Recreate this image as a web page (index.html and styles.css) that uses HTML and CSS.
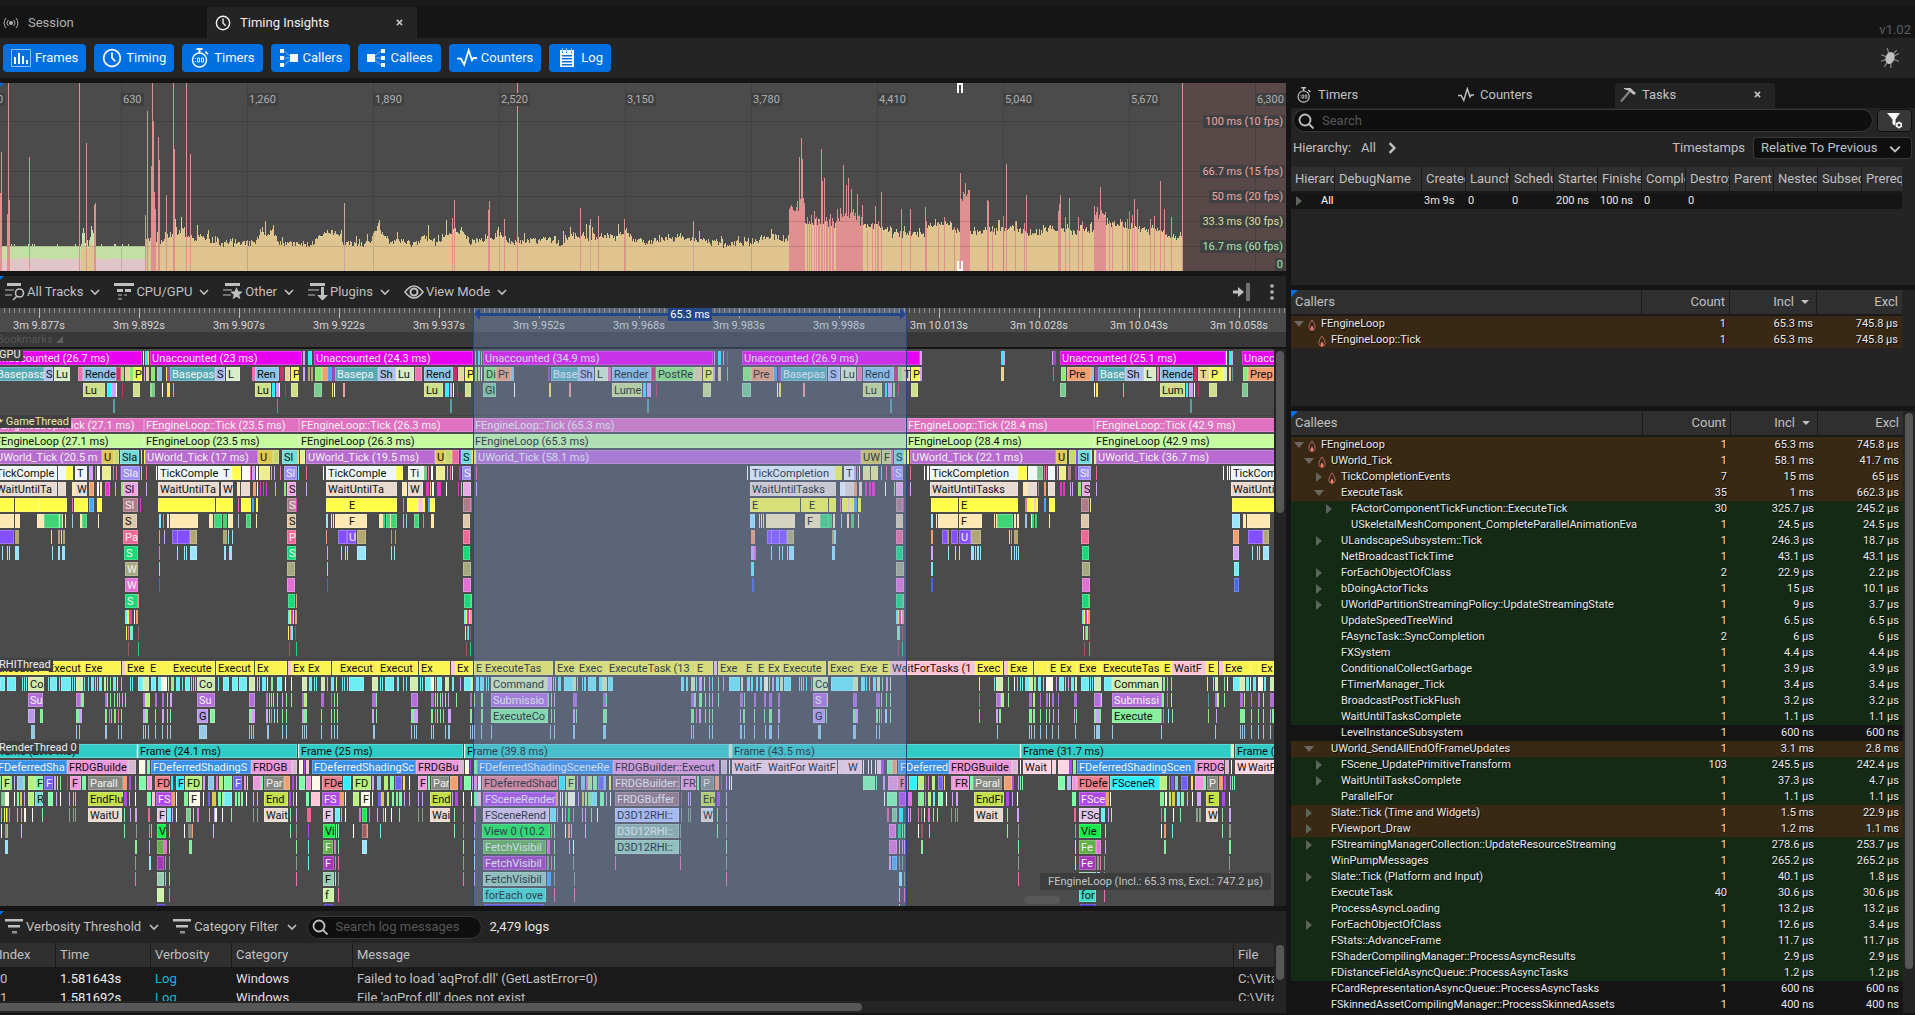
FILE: index.html
```html
<!DOCTYPE html>
<html lang="en">
<head>
    <meta charset="UTF-8">
    <meta name="viewport" content="width=device-width, initial-scale=1.0">
    <title>Timing Insights</title>
    <link rel="stylesheet" href="styles.css">
</head>
<body>
    <svg class="sprite" aria-hidden="true">
        <symbol id="i-session" viewBox="0 0 16 16"><circle cx="8" cy="8" r="2" fill="currentColor"/><path d="M5.3 5a4.5 4.5 0 0 0 0 6M10.700 5a4.500 4.500 0 0 1 0 6M3 3a7.500 7.500 0 0 0 0 10M13 3a7.500 7.500 0 0 1 0 10" fill="none" stroke="currentColor"/></symbol>
        <symbol id="i-clock" viewBox="0 0 18 18"><circle cx="9" cy="9" r="7.500" fill="none" stroke="currentColor" stroke-width="1.600"/><path d="M9 4v5l3 3" fill="none" stroke="currentColor" stroke-width="1.600"/></symbol>
        <symbol id="i-frames" viewBox="0 0 20 20"><path d="M.5 1.500h19v17H.5z" fill="none" stroke="currentColor" opacity=".6"/><path d="M3 9h2v7H3zM7 5h2v11H7zM11 8h2v8h-2zM15 12h2v4h-2z" fill="currentColor"/></symbol>
        <symbol id="i-timer" viewBox="0 0 18 20"><circle cx="8.500" cy="12" r="7" fill="none" stroke="currentColor" stroke-width="1.500"/><path d="M5.500 0h6v2h-6zM7.500 2h2v3h-2zM15 3l2.500 2.500-1.300 1.300L13.700 4.300z" fill="currentColor"/><path d="M4.300 10v1M4.300 13v1M6.500 10h2v4h-2zM10.500 10h2v4h-2z" fill="none" stroke="currentColor"/></symbol>
        <symbol id="i-callers" viewBox="0 0 20 20"><path d="M1 1h4v4H1zM1 8h4v4H1zM1 15h4v4H1zM11 6h8v8h-8z" fill="currentColor"/><path d="M5 3l6 5M5 10h6M5 17l6-5" stroke="currentColor" opacity=".5"/></symbol>
        <symbol id="i-callees" viewBox="0 0 20 20"><path d="M15 1h4v4h-4zM15 8h4v4h-4zM15 15h4v4h-4zM1 6h8v8H1z" fill="currentColor"/><path d="M15 3L9 8M15 10H9M15 17l-6-5" stroke="currentColor" opacity=".5"/></symbol>
        <symbol id="i-pulse" viewBox="0 0 18 18"><path d="M0 9.500h3.500L6.500 15 10.500 2l3 9 1.300-2H18" fill="none" stroke="currentColor" stroke-width="1.600"/></symbol>
        <symbol id="i-log" viewBox="0 0 16 20"><path fill-rule="evenodd" d="M1 2h2v3h1V2h3v3h1V2h4v3h1V2h2v17H1zM3 7v1.500h10V7zM3 10v1.500h10V10zM3 13v1.500h10V13zM3 16v1.500h10V16z" fill="currentColor"/><path d="M3.500 0v4M7.500 0v4M12.500 0v4" stroke="currentColor" opacity=".6"/></symbol>
        <symbol id="i-bug" viewBox="0 0 18 18"><ellipse cx="9" cy="9" rx="4" ry="5.500" transform="rotate(20 9 9)" fill="currentColor"/><path d="M9 9L1 6M9 9L1 12M9 9L6.500 0M9 9l8-4M9 9l8 3M9 9l1 9M9 9l6-7M9 9l-5 8" stroke="currentColor" opacity=".7"/></symbol>
        <symbol id="i-hammer" viewBox="0 0 16 16"><path d="M1 14.500L10 4" stroke="currentColor" stroke-width="2.200" opacity=".6"/><path d="M4 1h6.500l3 3L16 6l-2 2-2.500-2-2-2L4 2z" fill="currentColor"/></symbol>
        <symbol id="i-search" viewBox="0 0 16 16"><circle cx="7" cy="7" r="5.500" fill="none" stroke="currentColor" stroke-width="1.800"/><path d="M11 11l4.500 4.500" stroke="currentColor" stroke-width="1.800"/></symbol>
        <symbol id="i-funnel" viewBox="0 0 18 18"><path d="M1 1h13L9.500 7.500V14l-3-2V7.500z" fill="currentColor"/><circle cx="13" cy="13" r="3" fill="#383838"/><circle cx="13" cy="13" r="2.300" fill="none" stroke="currentColor" stroke-width="1.500"/><path d="M13 9.300v1.500M13 15.200v1.500M9.800 11.200l1.300.7M14.900 14.100l1.300.7M9.800 14.800l1.300-.7M14.900 11.900l1.300-.7" stroke="currentColor"/></symbol>
        <symbol id="i-down" viewBox="0 0 10 10"><path d="M1 3l4 4 4-4" fill="none" stroke="currentColor" stroke-width="1.600"/></symbol>
        <symbol id="i-right" viewBox="0 0 10 10"><path d="M3 1l4 4-4 4" fill="none" stroke="currentColor" stroke-width="2"/></symbol>
        <symbol id="i-close" viewBox="0 0 8 8"><path d="M1 1l6 6M7 1L1 7" stroke="currentColor" stroke-width="1.800"/></symbol>
        <symbol id="i-tracks" viewBox="0 0 20 18"><path d="M2 0h14v3H2z" fill="currentColor"/><path d="M0 6h9v2H0zM0 11h7v2H0z" fill="currentColor" opacity=".5"/><circle cx="14.500" cy="10" r="4" fill="none" stroke="currentColor" stroke-width="1.600"/><path d="M12 13l-4 4" stroke="currentColor" stroke-width="1.600"/></symbol>
        <symbol id="i-cpu" viewBox="0 0 20 18"><path d="M0 0h20v3H0zM3 6h6v3H3zM11 6h6v3h-6z" fill="currentColor"/><path d="M4 11h4v2H4zM4 15h4v2H4zM10 11h3v2h-3z" fill="currentColor" opacity=".5"/></symbol>
        <symbol id="i-other" viewBox="0 0 20 18"><path d="M2 0h15v3H2z" fill="currentColor"/><path d="M0 6h9v2H0zM0 11h8v2H0z" fill="currentColor" opacity=".5"/><path d="M13.500 4l1.800 4.300 4.400.4-3.400 3 1.100 4.500-3.900-2.400-3.900 2.400 1.100-4.500-3.400-3 4.400-.4z" fill="currentColor"/></symbol>
        <symbol id="i-plugins" viewBox="0 0 20 18"><path d="M2 0h15v3H2z" fill="currentColor"/><path d="M0 6h11v2H0zM0 11h7v2H0z" fill="currentColor" opacity=".5"/><path d="M13 4h3v8h4l-5.500 5.500L9 12h4z" fill="currentColor"/></symbol>
        <symbol id="i-eye" viewBox="0 0 20 14"><path d="M1 7q9-12 18 0-9 12-18 0z" fill="none" stroke="currentColor" stroke-width="1.600"/><circle cx="10" cy="7" r="3.500" fill="none" stroke="currentColor" stroke-width="2"/></symbol>
        <symbol id="i-filter" viewBox="0 0 18 16"><path d="M0 0h18v2.500H0zM3 6h12v2.500H3z" fill="currentColor"/><path d="M7 12h5v2.500H7z" fill="currentColor" opacity=".7"/></symbol>
        <symbol id="i-follow" viewBox="0 0 18 18"><path d="M0 7.500h5V4l6 5-6 5v-3.500H0z" fill="currentColor"/><path d="M13 0h4v18h-4z" fill="currentColor" opacity=".5"/></symbol>
        <symbol id="i-dots" viewBox="0 0 4 16"><path d="M.5.5h3v3h-3zM.5 6.500h3v3h-3zM.5 12.500h3v3h-3z" fill="currentColor"/></symbol>
        <symbol id="i-flame" viewBox="0 0 8 12"><path d="M4 .8Q7.300 5 7.300 8.500 6.500 11.500 4 11.500T.7 8.500Q.7 5 4 .8z" fill="none" stroke="#b0645c"/><path d="M4 6.500q1.800 2 1.500 3.700L4 11.500 2.500 10.200Q2.200 8.500 4 6.500z" fill="#f08078"/></symbol>
    </svg>

    <nav class="window-tabs">
        <button class="tab"><svg class="i16"><use href="#i-session"/></svg>Session</button>
        <button class="tab active"><svg class="i16"><use href="#i-clock"/></svg>Timing Insights<svg class="close"><use href="#i-close"/></svg></button>
        <span class="version">v1.02</span>
    </nav>

    <div class="toolbar">
        <button><svg class="i20"><use href="#i-frames"/></svg>Frames</button>
        <button><svg class="i20"><use href="#i-clock"/></svg>Timing</button>
        <button><svg class="i20"><use href="#i-timer"/></svg>Timers</button>
        <button><svg class="i20"><use href="#i-callers"/></svg>Callers</button>
        <button><svg class="i20"><use href="#i-callees"/></svg>Callees</button>
        <button><svg class="i20"><use href="#i-pulse"/></svg>Counters</button>
        <button><svg class="i20"><use href="#i-log"/></svg>Log</button>
        <svg class="bug"><use href="#i-bug"/></svg>
    </div>

    <main>
        <section class="left">
            <div class="panel frames" id="frames">
                <svg id="frames-graph" viewBox="0 0 1286 188" preserveAspectRatio="none"></svg>
                <div class="fps">
                    <span class="slow at-100">100 ms (10 fps)</span>
                    <span class="slow at-67">66.7 ms (15 fps)</span>
                    <span class="slow at-50">50 ms (20 fps)</span>
                    <span class="mid at-33">33.3 ms (30 fps)</span>
                    <span class="fast at-17">16.7 ms (60 fps)</span>
                    <span class="fast at-0">0</span>
                </div>
            </div>

            <div class="panel timing">
                <div class="bar">
                    <button><svg class="wide"><use href="#i-tracks"/></svg>All Tracks<svg class="i10"><use href="#i-down"/></svg></button>
                    <button><svg class="wide"><use href="#i-cpu"/></svg>CPU/GPU<svg class="i10"><use href="#i-down"/></svg></button>
                    <button><svg class="wide"><use href="#i-other"/></svg>Other<svg class="i10"><use href="#i-down"/></svg></button>
                    <button><svg class="wide"><use href="#i-plugins"/></svg>Plugins<svg class="i10"><use href="#i-down"/></svg></button>
                    <button><svg class="wide"><use href="#i-eye"/></svg>View Mode<svg class="i10"><use href="#i-down"/></svg></button>
                    <button class="follow" aria-label="Auto scroll"><svg class="i18"><use href="#i-follow"/></svg></button>
                    <button class="more" aria-label="More"><svg><use href="#i-dots"/></svg></button>
                </div>
                <div class="timeline">
                    <div class="ruler" id="ruler"></div>
                    <div class="bookmarks">Bookmarks<i></i></div>
                    <div class="tracks-wrap">
                        <div class="tracks" id="tracks"></div>
                        <div class="scroll-v"><div class="thumb tall"></div></div>
                    </div>
                    <div class="selection"><span>65.3 ms</span></div>
                    <div class="hint">FEngineLoop (Incl.: 65.3 ms, Excl.: 747.2 µs)</div>
                    <div class="scroll-h"></div>
                </div>
            </div>

            <div class="panel log">
                <div class="bar">
                    <button><svg class="filter"><use href="#i-filter"/></svg>Verbosity Threshold<svg class="i10"><use href="#i-down"/></svg></button>
                    <button><svg class="filter"><use href="#i-filter"/></svg>Category Filter<svg class="i10"><use href="#i-down"/></svg></button>
                    <label class="search"><svg class="i16"><use href="#i-search"/></svg><input type="text" placeholder="Search log messages" aria-label="Search log messages"></label>
                    <span class="count">2,479 logs</span>
                </div>
                <div class="log-body">
                    <table class="log-table">
                        <colgroup><col class="c-index"><col class="c-time"><col class="c-verb"><col class="c-cat"><col><col class="c-file"></colgroup>
                        <thead><tr><th>Index</th><th>Time</th><th>Verbosity</th><th>Category</th><th>Message</th><th>File</th></tr></thead>
                        <tbody>
                            <tr><td>0</td><td class="hi">1.581643s</td><td class="verb">Log</td><td class="cat">Windows</td><td>Failed to load 'aqProf.dll' (GetLastError=0)</td><td>C:\Vita</td></tr>
                            <tr><td>1</td><td class="hi">1.581692s</td><td class="verb">Log</td><td class="cat">Windows</td><td>File 'aqProf.dll' does not exist</td><td>C:\Vita</td></tr>
                        </tbody>
                    </table>
                    <div class="scroll-v"><div class="thumb short"></div></div>
                </div>
                <div class="log-scroll"></div>
            </div>
        </section>

        <section class="right">
            <div class="tasks">
                <nav class="sub-tabs">
                    <button class="tab"><svg class="i16"><use href="#i-timer"/></svg>Timers</button>
                    <button class="tab"><svg class="i16"><use href="#i-pulse"/></svg>Counters</button>
                    <button class="tab active"><svg class="i16"><use href="#i-hammer"/></svg>Tasks<svg class="close"><use href="#i-close"/></svg></button>
                </nav>
                <div class="panel tasks-body">
                    <div class="row">
                        <label class="search"><svg class="i16"><use href="#i-search"/></svg><input type="text" placeholder="Search" aria-label="Search"></label>
                        <button class="filter-btn" aria-label="Filter"><svg class="i18"><use href="#i-funnel"/></svg></button>
                    </div>
                    <div class="row hierarchy">
                        <span>Hierarchy:</span><span>All</span><svg class="i10"><use href="#i-right"/></svg>
                        <label for="stamps">Timestamps</label>
                        <div class="select">
                            <select id="stamps"><option>Relative To Previous</option></select>
                            <svg class="i10"><use href="#i-down"/></svg>
                        </div>
                    </div>
                    <table class="tasks-table">
                        <colgroup><col><col class="c-debug"><col><col><col><col><col><col><col><col><col><col><col class="c-last"></colgroup>
                        <thead><tr><th>Hierarchy</th><th>DebugName</th><th>Created</th><th>Launched</th><th>Scheduled</th><th>Started</th><th>Finished</th><th>Completed</th><th>Destroyed</th><th>Parent</th><th>Nested</th><th>Subsequents</th><th>Prerequisites</th></tr></thead>
                        <tbody><tr><td class="name"><i class="closed"></i>All</td><td></td><td>3m 9s</td><td>0</td><td>0</td><td>200 ns</td><td>100 ns</td><td>0</td><td>0</td><td></td><td></td><td></td><td></td></tr></tbody>
                    </table>
                </div>
            </div>

            <div class="panel callers">
                <table class="calls">
                    <colgroup><col><col class="c-count"><col class="c-incl"><col class="c-excl"></colgroup>
                    <thead><tr><th>Callers</th><th>Count</th><th>Incl<i></i></th><th>Excl</th></tr></thead>
                    <tbody id="callers"></tbody>
                </table>
            </div>

            <div class="panel callees">
                <table class="calls">
                    <colgroup><col><col class="c-count"><col class="c-incl"><col class="c-excl"></colgroup>
                    <thead><tr><th>Callees</th><th>Count</th><th>Incl<i></i></th><th>Excl</th></tr></thead>
                    <tbody id="callees"></tbody>
                </table>
                <div class="scroll-v"><div class="thumb long"></div></div>
            </div>
        </section>
    </main>

    <script src="script.js"></script>
</body>
</html>
```

FILE: styles.css
```css
* {
    box-sizing: border-box;
}
body {
    margin: 0;
    height: 100vh;
    display: flex;
    flex-direction: column;
    overflow: hidden;
    padding-top: 7px;
    background-color: #1a1a1a;
    color: #c0c0c0;
    font-family: Roboto, sans-serif;
    font-size: 13px;
    line-height: 16px;
}
button,
input,
select {
    font: inherit;
    color: inherit;
    background: none;
    border: none;
    padding: 0;
    margin: 0;
}
svg {
    flex: none;
}
.sprite {
    position: absolute;
    width: 0;
    height: 0;
}
.i10 { width: 10px; height: 10px; }
.i16 { width: 16px; height: 16px; }
.i18 { width: 18px; height: 18px; }
.i20 { width: 20px; height: 20px; }

/* window tabs and main toolbar */
.window-tabs {
    display: flex;
    flex: none;
    height: 31px;
    background-color: #151515;
}
.tab {
    display: flex;
    align-items: center;
    gap: 9px;
    color: #b0b0b0;
}
.window-tabs .tab {
    width: 210px;
    padding: 0 14px 0 3px;
}
.window-tabs .tab:first-child {
    width: 207px;
}
.tab.active {
    background-color: #242424;
    border-radius: 4px 4px 0 0;
}
.window-tabs .tab.active {
    color: #f0f0f0;
    padding-left: 8px;
}
.close {
    width: 7px;
    height: 7px;
    margin-left: auto;
    color: #c0c0c0;
}
.version {
    margin-left: auto;
    align-self: flex-end;
    padding-right: 4px;
    color: #5c5c5c;
}
.toolbar {
    display: flex;
    flex: none;
    align-items: center;
    gap: 8px;
    height: 40px;
    padding: 0 15px 0 3px;
    background-color: #242424;
}
.toolbar button {
    display: flex;
    align-items: center;
    gap: 4px;
    height: 28px;
    padding: 0 8px;
    border-radius: 4px;
    background-color: #0070e0;
    color: #f4f8ff;
}
.bug {
    width: 20px;
    height: 20px;
    margin-left: auto;
}

/* panels */
main {
    flex: 1;
    min-height: 0;
    display: grid;
    grid-template-columns: 1286fr 624fr;
    gap: 5px;
    padding: 5px 0 2px;
    background-color: #151515;
}
.left,
.right {
    display: flex;
    flex-direction: column;
    gap: 5px;
    min-width: 0;
    min-height: 0;
}
.panel {
    position: relative;
    overflow: hidden;
    background-color: #242424;
}
.panel:not(.tasks-body)::before {
    content: "";
    position: absolute;
    z-index: 5;
    left: 0;
    top: 0;
    border-top: 7px solid #0070e0;
    border-right: 7px solid transparent;
}
.left .panel::before {
    border-top-width: 4px;
    border-right-width: 4px;
}

/* frames graph */
.frames {
    flex: none;
    height: 188px;
    background-color: #4b4b4b;
    font-size: 11px;
    line-height: 12px;
}
.frames svg {
    display: block;
    width: 100%;
    height: 188px;
}
.frame-no {
    position: absolute;
    top: 10px;
    padding: 1px 2px 0;
    background-color: #404040;
    color: #b0b0b0;
}
.fps span {
    position: absolute;
    right: 1px;
    padding: 1px 2px 0;
    background-color: #404040;
}
.slow { color: #eaa8a8; }
.mid { color: #dede9c; }
.fast { color: #a8e8b0; }
.at-100 { top: 32px; }
.at-67 { top: 82px; }
.at-50 { top: 107px; }
.at-33 { top: 132px; }
.at-17 { top: 157px; }
.at-0 { top: 175px; }

/* timing view */
.timing {
    flex: 1;
    min-height: 0;
    display: flex;
    flex-direction: column;
}
.bar {
    display: flex;
    flex: none;
    align-items: center;
    height: 32px;
    padding: 0 12px 0 5px;
}
.bar button {
    display: flex;
    align-items: center;
    gap: 2px;
    margin-right: 14px;
}
.bar button .i10 {
    margin-left: 5px;
}
.wide {
    width: 20px;
    height: 18px;
}
.bar .follow {
    margin-left: auto;
    margin-right: 19px;
}
.bar .more {
    margin-right: 0;
}
.more svg {
    width: 4px;
    height: 16px;
}
.timeline {
    position: relative;
    flex: 1;
    min-height: 0;
    display: flex;
    flex-direction: column;
    overflow: hidden;
    font-size: 11px;
    line-height: 14px;
}
.ruler {
    position: relative;
    flex: none;
    height: 24px;
    background-color: #4b4b4b;
    background-image:
        repeating-linear-gradient(to right, #b8b8b8 0 1px, transparent 1px 100px),
        repeating-linear-gradient(to right, #909090 0 1px, transparent 1px 5px);
    background-size: 100px 10px, 5px 5px;
    background-position: 39px 0, 4px 0;
    background-repeat: repeat-x;
}
.ruler span {
    position: absolute;
    top: 11px;
    width: 100px;
    text-align: center;
    color: #d4d4d4;
}
.bookmarks {
    display: flex;
    flex: none;
    align-items: center;
    gap: 3px;
    height: 17px;
    margin-left: -3px;
    border-bottom: 2px solid #141414;
    background-color: #383838;
    color: #565656;
}
.bookmarks i {
    border-left: 7px solid transparent;
    border-bottom: 7px solid #606060;
}
.tracks-wrap {
    flex: 1;
    min-height: 0;
    display: flex;
}
.tracks {
    position: relative;
    flex: 1;
    overflow: hidden;
    background-color: #4b4b4b;
}
.track {
    position: relative;
    padding-top: 2px;
    border-top: 1px solid #424242;
}
.track:first-child {
    border-top: none;
}
.track h4 {
    position: absolute;
    z-index: 2;
    left: -3px;
    top: 0;
    margin: 0;
    padding: 0 2px;
    background-color: #404040;
    color: #ececec;
    font-size: 11px;
    font-weight: normal;
    line-height: 12px;
}
.track h4.game {
    left: -8px;
    color: #e8e8a0;
}
.lane {
    position: relative;
    height: 16px;
}
.ev {
    position: absolute;
    top: 0;
    height: 14px;
    overflow: hidden;
    white-space: nowrap;
    line-height: 16px;
    color: #101010;
}
.ev.boxed {
    padding-left: 2px;
    box-shadow: inset 0 0 0 1px rgba(255, 255, 255, 0.22);
}
.ev.light {
    color: #f2f2f2;
}
.selection {
    position: absolute;
    z-index: 3;
    left: 473px;
    top: 0;
    bottom: 0;
    width: 434px;
    border-left: 1px solid #24478a;
    border-right: 1px solid #24478a;
    background-color: rgba(130, 162, 220, 0.31);
    text-align: center;
    line-height: 13px;
}
.selection::before {
    content: "";
    position: absolute;
    left: 0;
    right: 0;
    top: 0;
    height: 12px;
    background-color: #24478a;
    clip-path: polygon(0 50%, 6px 0, 6px 5px, calc(100% - 6px) 5px, calc(100% - 6px) 0, 100% 50%, calc(100% - 6px) 100%, calc(100% - 6px) 8px, 6px 8px, 6px 100%);
}
.selection span {
    position: relative;
    display: inline-block;
    padding: 0 2px;
    background-color: #24478a;
    color: #ffffff;
}
.hint {
    position: absolute;
    z-index: 4;
    right: 15px;
    bottom: 16px;
    padding: 2px 8px 1px;
    background-color: #3d3d3d;
    color: #c4c4c4;
}
.scroll-h {
    position: absolute;
    right: 226px;
    bottom: 2px;
    width: 36px;
    height: 8px;
    border-radius: 4px;
    background-color: #585858;
}
.scroll-v {
    flex: none;
    width: 12px;
    padding: 2px;
}
.thumb {
    border-radius: 4px;
    background-color: #575757;
}
.tall { height: 162px; }
.short { height: 35px; }
.long { height: 556px; }

/* log */
.log {
    flex: none;
    height: 102px;
}
.filter {
    width: 18px;
    height: 16px;
}
.log .bar button {
    gap: 3px;
}
.search {
    display: flex;
    align-items: center;
    gap: 8px;
    height: 23px;
    padding: 0 4px;
    border: 1px solid #383838;
    border-radius: 12px;
    background-color: #0f0f0f;
}
.search input {
    flex: 1;
    min-width: 0;
    outline: none;
}
.search input::placeholder {
    color: #585858;
}
.log .search {
    width: 175px;
    margin-left: -4px;
}
.count {
    margin-left: 8px;
    color: #e4e4e4;
}
.log-body {
    display: flex;
    height: 58px;
    overflow: hidden;
}
table {
    flex: 1;
    align-self: flex-start;
    width: 100%;
    table-layout: fixed;
    border-collapse: separate;
    border-spacing: 0;
}
th {
    height: 24px;
    padding: 0 4px;
    overflow: hidden;
    white-space: nowrap;
    text-align: left;
    font-weight: normal;
    background-color: #2f2f2f;
    border-right: 1px solid #1a1a1a;
}
th:last-child {
    border-right: none;
}
td {
    overflow: hidden;
    white-space: nowrap;
    padding: 0;
}
.log-table tbody {
    background-color: #1a1a1a;
}
.log-table th:first-child,
.log-table td:first-child {
    padding-left: 0;
}
.log-table th:first-child {
    text-indent: -1px;
}
.log-table td {
    height: 19px;
    padding-left: 4px;
    vertical-align: bottom;
}
.log-table tr:first-child td {
    height: 20px;
}
.log-table .hi { color: #f0f0f0; }
.log-table .verb { color: #18b8d8; }
.log-table .cat { color: #e8dce0; }
.c-index { width: 56px; }
.c-time { width: 95px; }
.c-verb { width: 81px; }
.c-cat { width: 121px; }
.c-file { width: 40px; }
.log-scroll {
    width: 67%;
    height: 8px;
    margin-top: 2px;
    border-radius: 0 4px 4px 0;
    background-color: #575757;
}

/* tasks */
.tasks {
    flex: none;
    display: flex;
    flex-direction: column;
    height: 202px;
}
.sub-tabs {
    display: flex;
    gap: 2px;
    flex: none;
    height: 25px;
}
.sub-tabs .tab {
    width: 160px;
    padding: 0 14px 2px 5px;
    gap: 6px;
    color: #c0c0c0;
}
.tasks-body {
    flex: 1;
    padding-top: 1px;
}
.row {
    display: flex;
    align-items: center;
    gap: 4px;
    padding: 0 3px 0 2px;
}
.row .search {
    flex: 1;
}
.filter-btn {
    display: flex;
    align-items: center;
    justify-content: center;
    width: 35px;
    height: 23px;
    border: 1px solid #0f0f0f;
    border-radius: 4px;
    background-color: #383838;
    color: #ffffff;
}
.hierarchy {
    gap: 10px;
    margin: 5px 0 8px;
}
.hierarchy .i10 {
    width: 12px;
    height: 12px;
}
.hierarchy label {
    margin-left: auto;
    margin-right: -2px;
}
.select {
    position: relative;
    width: 159px;
    height: 22px;
    border: 1px solid #383838;
    border-radius: 4px;
    background-color: #0f0f0f;
}
.select select {
    appearance: none;
    width: 100%;
    height: 20px;
    padding-left: 7px;
}
.select svg {
    position: absolute;
    right: 10px;
    top: 5px;
    pointer-events: none;
}
.tasks-table,
.calls {
    width: calc(100% - 13px);
}
.tasks-table th,
.calls th {
    height: 26px;
    border-bottom: 2px solid #1a1a1a;
}
.tasks-table td,
.calls td {
    height: 16px;
    font-size: 11px;
    line-height: 16px;
    color: #e8e8e8;
}
.tasks-table td {
    background-color: #151515;
    padding-left: 2px;
}
.tasks-table .name {
    padding-left: 5px;
    color: #ffffff;
}
.c-debug { width: 87px; }
.c-last { width: 40px; }

/* callers and callees */
.callers {
    flex: none;
    height: 116px;
}
.callees {
    flex: 1;
    min-height: 0;
    display: flex;
}
.calls th:not(:first-child),
.calls td:not(:first-child) {
    text-align: right;
}
.calls td:not(:first-child) {
    padding-right: 4px;
}
.calls th i {
    display: inline-block;
    margin: 0 3px 2px 7px;
    border: 4px solid transparent;
    border-top-color: #c0c0c0;
    border-bottom: none;
}
.c-count { width: 88px; }
.c-incl { width: 87px; }
.c-excl { width: 85px; }
.calls .ms { background-color: #382814; }
.calls .us { background-color: #142a14; }
.calls .ns { background-color: #151515; }
.calls td {
    text-shadow: 1px 1px 0 #0a0a0a;
}
.cell {
    display: flex;
    align-items: center;
}
.open {
    flex: none;
    border-top: 6px solid #6c6860;
    border-left: 5px solid transparent;
    border-right: 5px solid transparent;
}
.closed {
    flex: none;
    display: inline-block;
    margin: 0 2px;
    border-top: 5px solid transparent;
    border-bottom: 5px solid transparent;
    border-left: 6px solid #5c645c;
}
.leaf {
    flex: none;
    width: 10px;
}
.tasks-table .closed {
    margin: 0 19px 0 0;
    vertical-align: -2px;
}
.flame {
    width: 8px;
    height: 12px;
    margin: 2px 5px 0 4px;
}
.no-flame {
    flex: none;
    width: 17px;
}
```

FILE: script.js
```js
// ---------- frames graph ----------
let seed = 7;
function rnd() {
    seed = (seed * 16807) % 2147483647;
    return seed / 2147483647;
}

const colors = { green: '#c5e0a5', pink: '#e0c5c8', orange: '#e0c48f', red: '#e09090', pale: '#c8a8a0' };
const paths = { green: '', orange: '', pink: '', pale: '', red: '' };
function bar(color, x, h, w = 1) {
    paths[color] += `M${x} 188v-${h}h${w}v${h}z`;
}

// x, height pairs of the average frame time
const profile = [145,30, 152,32, 160,27, 170,36, 182,40, 190,29, 200,34, 212,30, 222,27, 240,26, 255,28, 262,38, 274,38,
    280,27, 310,26, 325,36, 337,38, 343,27, 368,27, 378,44, 386,29, 402,31, 412,25, 425,34, 435,28, 448,38, 462,38, 470,29,
    490,30, 497,38, 508,29, 522,27, 540,31, 555,29, 562,27, 570,36, 590,32, 600,36, 615,33, 625,40, 634,29, 645,27, 665,32,
    690,30, 725,26, 750,28, 772,34, 789,31, 790,46, 860,46, 880,44, 892,36, 925,36, 930,46, 950,46, 955,40, 960,40, 985,38,
    1000,40, 1008,44, 1030,36, 1050,42, 1062,42, 1075,38, 1095,42, 1110,47, 1135,44, 1148,36, 1154,44, 1168,34, 1176,32, 1182,38];
for (let i = 0; i < profile.length - 2; i += 2) {
    const [x0, h0, x1, h1] = profile.slice(i, i + 4);
    for (let x = x0; x < x1; x++) {
        const peak = rnd() > 0.9 ? rnd() * 9 : 0;
        const h = Math.round(h0 + (h1 - h0) * (x - x0) / (x1 - x0) + rnd() * 7 - 3 + peak);
        if (rnd() > 0.85) bar('green', x, h + 3);
        bar('orange', x, h);
    }
}
for (let x = 0; x < 145; x++) {
    bar('green', x, rnd() > 0.93 ? 27 : 25);
    if (x < 81 || x > 95) {
        bar('pink', x, 11 + Math.round(rnd() * 2));
    } else {
        bar('green', x, 24 + Math.round(rnd() * 22));
        bar('orange', x, 18 + Math.round(rnd() * 14));
    }
}
// solid runs of slow frames: from, to, height
[[789, 805, 66], [836, 858, 56], [858, 862, 50], [960, 970, 76], [1094, 1106, 58]].forEach(([a, b, h]) => {
    for (let x = a; x < b; x++) bar('red', x, h + Math.round(rnd() * 14 - 7));
});
// single spikes: x, height
[0,78, 1,119, 7,57, 8,188, 9,71, 29,114, 79,188, 86,128, 94,66, 95,68, 145,56, 147,160, 151,105, 152,188, 153,150, 154,79,
    155,62, 158,134, 159,111, 166,76, 173,188, 174,122, 186,188, 190,117, 452,53, 454,71, 488,61, 489,70, 504,52, 517,188,
    580,63, 598,55, 624,52, 799,114, 801,133, 802,112, 807,54, 809,50, 811,56, 814,60, 816,54, 818,50, 819,52, 821,122, 822,90,
    824,93, 826,54, 827,50, 829,52, 830,57, 832,53, 833,50, 843,106, 846,86, 848,93, 851,82, 857,77, 862,66, 867,40, 872,48,
    875,65, 878,50, 881,79, 901,62, 910,62, 925,64, 926,50, 938,48, 944,54, 954,44, 960,98, 965,88, 968,79, 987,71, 988,70,
    992,42, 1003,55, 1006,107, 1015,50, 1024,48, 1026,76, 1058,60, 1059,67, 1060,76, 1065,54, 1069,73, 1078,54, 1082,50,
    1100,84, 1109,50, 1112,46, 1122,50, 1127,52, 1129,60, 1132,56, 1134,72, 1137,62, 1150,52, 1154,55, 1160,90, 1164,62,
    1171,54, 1182,188].forEach((v, i, a) => {
    if (i % 2 === 0) bar('red', v, a[i + 1]);
});
[181,54, 344,68, 590,52, 693,50].forEach((v, i, a) => {
    if (i % 2 === 0) bar(i ? 'pale' : 'green', v, a[i + 1]);
});

let graph = '<path d="M1183 0H1286V188H1183z" fill="#584848"/>';
for (const c in paths) graph += `<path d="${paths[c]}" fill="${colors[c]}"/>`;
let grid = '';
for (let x = 121; x < 1286; x += 126) grid += `M${x} 0h1v188h-1z`;
[38, 88, 113, 138, 163].forEach(y => grid += `M0 ${y}h1286v1H0z`);
graph += `<path d="${grid}" fill="#000" opacity=".13"/>`;
graph += '<path d="M957 0h6v10h-2V2h-2v8h-2zM957 188h6v-10h-2v8h-2v-8h-2z" fill="#fff"/>';
document.getElementById('frames-graph').innerHTML = graph;

['0', '630', '1,260', '1,890', '2,520', '3,150', '3,780', '4,410', '5,040', '5,670', '6,300'].forEach((t, i) => {
    const el = document.createElement('span');
    el.className = 'frame-no';
    el.textContent = t;
    el.style.left = (i * 126 - 5) / 12.86 + '%';
    document.getElementById('frames').appendChild(el);
});

// ---------- time ruler ----------
['9.877', '9.892', '9.907', '9.922', '9.937', '9.952', '9.968', '9.983', '9.998', '10.013', '10.028', '10.043', '10.058'].forEach((t, i) => {
    const el = document.createElement('span');
    el.textContent = '3m ' + t + 's';
    el.style.left = i * 100 - 11 + 'px';
    document.getElementById('ruler').appendChild(el);
});

// ---------- timing tracks ----------
const pal = {
    m: '#e800f0', cy: '#2ef0ff', tl: '#57aab4', bl: '#b0bef0', lg: '#d8ecc8', hp: '#ee72b2', sk: '#8cc4ea', cr: '#c83068',
    lm: '#f2fa5a', tn: '#e8d498', gr: '#8ee878', sg: '#7cc890', or: '#f0a070', pu: '#9a4ab4', kh: '#cdde8c', vi: '#d0a4fa',
    w: '#ffffff', gs: '#57a0a0', yl: '#ffe060', sa: '#f09c9c', pk: '#e070c0', lt: '#c6fba2', wt: '#b86bd0', go: '#ddc850',
    ol: '#c8d870', tq: '#74dada', pt: '#eef6fa', yw: '#fdfd4a', wb: '#e8dad0', pc: '#fde8b4', gn: '#3ed478', ip: '#8450ff',
    kk: '#b0a870', lb: '#9ae4ff', pp: '#9a8cfa', pm: '#eaa8e4', br: '#ad7c86', bs: '#dcc8a8', re: '#ec6896', eg: '#18d878',
    ac: '#a6a880', og: '#e072d4', rw: '#ecec90', mg: '#e834c8', bu: '#48a8f8', rb: '#ee98dc', db: '#4866e8', yx: '#fbf450',
    px: '#fcc4d4', cx: '#70ecf4', co: '#d2ecb0', su: '#b070d8', gt: '#88f09c', gp: '#b898e8', sb: '#98c8e4', fr: '#30ccc6',
    df: '#3890ea', th: '#d8b8d0', cm: '#fdf8e4', pl: '#fcd4e4', fd: '#ec808c', gy: '#848880', lc: '#b8f080', en: '#c4e048',
    fs: '#b048e8', fn: '#e0c8e8', vv: '#10ec48', fv: '#60b048', fp: '#a038b8', fg: '#98ccb0', fo: '#ccf4a8', fc: '#40dcc8',
    in: '#4838c8', mn: '#80fca8', dk: '#a05860', dd: '#8aa08c', dg: '#96707a', db2: '#b8c4fa', tp: '#8cb0a0', bo: '#7060f0'
};
const lightText = ['m', 'tl', 'pk', 'wt', 'pp', 'br', 're', 'eg', 'ac', 'og', 'ip', 'su', 'df', 'gy', 'fs', 'fv', 'fp', 'bo', 'dg', 'tp'];

// each entry is "x[,x...] width color text"
const tracks = [
    { name: 'GPU', lanes: [
        '-7 149 m Unaccounted (26.7 ms)|143 1 w|145 3 cy|148 1 yl|150 152 m Unaccounted (23 ms)|303 2 vi|308 3 cy|311 1 gr|314 159 m Unaccounted (24.3 ms)|475 1 vi|478 2 cy|481 1 gr|483 230 m Unaccounted (34.9 ms)|714 1 vi|718 3 cy|723 1 vi|727 1 pu|742 178 m Unaccounted (26.9 ms)|920 2 vi|1001 3 cy|1004 1 vi|1052 1 vi|1053 3 pu|1060 166 m Unaccounted (25.1 ms)|1226 1 w|1229 3 cy|1232 1 vi|1242 50 m Unaccounted',
        '-5 49 tl Basepass|44 9 bl S|54 16 lg Lu|78 5 hp|83 33 sk Rende|116 5 cr|121 3 gr|125 5 tn|130 3 gr|133 9 lm P|144 1 vi|146 3 tn|151 4 gr|157 5 or|158 4 sk|166 1 yl|167 3 pu|170 45 tl Basepas|215 10 bl S|226 14 lg L|252 3 hp|255 24 sk Ren|280 4 cr|285 5 tn|291 8 lm P|303 2 vi|308,311 2 kk|315 7 gr|322 7 or|328 4 bu|332 3 pu|335 43 tl Basepa|378 18 bl Sh|396 18 lg Lu|415 7 hp|424 29 sk Rend|453 4 cr|458 6 tn|465 8 lm P|475 2 gr|478 2 tn|481 1 w|484 12 gr Di|496 15 or Pr|511 3 sk|548 2 pu|551 27 tl Base|578 16 bl Sh|595 13 lg L|608 3 hp|612 39 sk Render|651 5 cr|656 38 gr PostRe|694 8 tn|703 10 lm P|713 2 vi|718 3 tn|727 1 sg|743 8 gr|751 23 or Pre|774 3 bu|778 3 pu|781 46 tl Basepas|828 12 bl S|841 15 lg Lu|857 5 hp|863 31 sk Rend|894 4 cr|898 6 gr|902 8 tn T|911 9 lm P|920 2 vi|1001 3 tn|1053 1 gs|1061 5 gr|1067 24 or Pre|1091 3 sk|1095 3 pu|1098 27 tl Base|1125 19 bl Sh|1144 12 lg L|1157 2 hp|1160 33 sk Rende|1194 3 cr|1198 12 tn T|1209 15 lm P|1224 3 lg|1229 2 tn|1232 1 gs|1243 5 gr|1248 40 or Prep',
        '83 22 kh Lu|107 5 cy|112 4 vi|116 1 w|122 1 cr|133 7 kh|150 2 gr|152 3 sg|162 1 w|167 3 yl|173 1 sa|255 16 kh Lu|272 3 cy|276 3 vi|279 1 w|285 1 cr|291 7 kh|314 8 sg|332 1 yl|334 1 w|343 2 sa|424 19 kh Lu|445 4 cy|450 2 vi|453 1 w|457 1 cr|465 6 kh|483 13 sg Gl|514 1 w|549 2 yl|569 2 sa|612 30 kh Lume|643 3 cy|647 4 vi|656 1 cr|703 8 kh|742 9 sg|777 1 w|779 2 yl|803 2 sa|863 19 kh Lu|885 2 cy|888 4 vi|893 2 gr|898 1 cr|911 7 kh|1060 6 sg|1094 1 w|1096 2 yl|1123 1 sa|1160 25 kh Lum|1186 2 cy|1189 4 vi|1194 1 w|1198 1 cr|1209 8 kh|1242 6 sg',
        '113 2 gs|277 1 gs|450 2 gs|647 2 gs|890 2 gs|1190 2 gs'
    ] },
    { name: '⟳ GameThread', cls: 'game', lanes: [
        '-7 151 pk FEngineLoop::Tick (27.1 ms)|144 155 pk FEngineLoop::Tick (23.5 ms)|299 174 pk FEngineLoop::Tick (26.3 ms)|473 433 pk FEngineLoop::Tick (65.3 ms)|906 188 pk FEngineLoop::Tick (28.4 ms)|1094 190 pk FEngineLoop::Tick (42.9 ms)',
        '-7 151 lt FEngineLoop (27.1 ms)|144 155 lt FEngineLoop (23.5 ms)|299 174 lt FEngineLoop (26.3 ms)|473 433 lt FEngineLoop (65.3 ms)|906 188 lt FEngineLoop (28.4 ms)|1094 190 lt FEngineLoop (42.9 ms)',
        '-6 108 wt UWorld_Tick (20.5 m|102 12 go U|114 5 ol|120 19 tq Sla|141 1 yl|144 1 lm|145 113 wt UWorld_Tick (17 ms)|258 15 go U|273 6 ol|282 16 tq Sl|298 1 yl|300 5 rw|306 129 wt UWorld_Tick (19.5 ms)|435 10 go U|445 7 ol|452 7 re|460 1 ip|461 11 tq S|472 1 yl|474 2 lm|476 385 wt UWorld_Tick (58.1 ms)|861 20 go UW|882 9 ol F|891 2 hp|894 10 tq S|904 2 lm|907 2 lm|910 146 wt UWorld_Tick (22.1 ms)|1056 11 go U|1069 7 ol|1076 2 ip|1078 13 tq Sl|1091 1 lm|1094 2 rw|1096 190 wt UWorld_Tick (36.7 ms)',
        '-6 63 pt TickComple|58 8 pt|66 7 yw|75 12 pt T|89 4 vi|95 1 hp|97 3 w|102 9 rw|113,116 1 hp|120 1 pu|121 19 pp Sla|141 1 cx|146 1 re|156 1 w|158 63 pt TickComple|221 11 pt T|232 9 yw|242 8 w|250 1 hp|252 3 vi|256 2 w|259 11 rw|271,274 1 vi|280 1 hp|284 13 pp Sl|298 1 cx|306 1 re|323 1 w|326 70 pt TickComple|396 7 yw|408 16 pt Ti|424 3 sg|428 1 hp|431 2 w|436 9 rw|447 1 vi|450 1 hp|452 1 w|459 2 pu|462 9 pp S|476 1 re|747 1 w|750 85 pt TickCompletion|835 7 yw|844 10 pt T|854 2 vi|857 1 hp|859 1 w|863 7 rw|871 7 rw|881 1 vi|886 1 hp|891 2 hp|893 10 pp S|910 1 re|924 1 w|927 2 w|930 88 pt TickCompletion|1018 9 yw|1028 9 pt|1037 6 sg|1044,1046 1 hp|1048 7 pt|1057 1 vi|1059 7 rw|1068 3 br|1075 2 pu|1078 13 pp Sl|1096 1 re|1223,1227,1229 1 w|1231 43 pt TickCom',
        '-6 63 wb WaitUntilTa|58 8 wb|72 3 pc|75 12 wb W|89 5 or|97 2 w|100 2 pc|105 5 mg|115 1 vi|121 2 gr|123 15 pm Sl|146 1 vi|158 61 wb WaitUntilTa|221 12 wb W|237 3 pc|241 9 wb|253 3 or|257 1 w|260,263,266 1 mg|275 1 vi|284 2 gr|287 9 pm S|306 1 vi|326 71 wb WaitUntilTa|402 5 pc|408 15 wb W|426 3 mg|430 1 yl|432 2 w|437 4 mg|446 1 w|458 1 mg|461 1 gr|463 8 pm|476 1 vi|750 86 wb WaitUntilTasks|840 5 pt|845 9 wb|854 3 or|859 3 wb|865,869 2 mg|872 3 mg|885 1 w|894 1 gr|896 7 pm|910 1 vi|930 88 wb WaitUntilTasks|1023 4 pc|1027 10 wb|1038 1 br|1044 2 or|1048 7 wb|1060 2 mg|1063 2 mg|1070,1072 1 vi|1078 3 gr|1082 8 pm S|1096 1 vi|1231 44 wb WaitUnti',
        '-3 17 yw|15 24 yw|39 28 yw|72 1 hp|74 14 yw|89 5 bu|97 5 yw|123 15 br Sl|140 1 mg|158 57 yw|216 17 yw|238 1 hp|241 10 yw|252 2 bu|256 2 yw|287 9 br S|296 1 mg|326 21 yw|347 50 yw E|403 1 hp|407 11 yw|418 5 px|423 2 yw|428 2 bu|430 5 yw|463 8 br|471 1 mg|750 50 yw E|801 6 yw|807 21 yw E|829 7 yw|840 1 hp|842 12 yw|848 1 px|854 3 bu|858 3 yw|896 7 br|903 1 mg|931 27 yw|959 59 yw E|1025 2 hp|1027 11 yw|1034 2 px|1044 2 bu|1049 6 yw|1081 8 br|1090 1 rw|1232 42 yw',
        '-3 17 pc|15 5 pc|37 7 pc|44 15 gn|59,62,65 1 pc|60 2 gn|72 1 sb|80 2 pc|82 5 gn|98 1 pc|123 14 bs S|159 2 lb|163 1 hp|167 2 pc|170 28 pc|209 4 pc|214 8 gn|223 4 gn|228 5 pc|238 1 sb|246 5 gn|256 1 pc|287 9 bs S|326 2 lb|331,333 1 pc|335 12 pc|347 20 pc F|379 4 pc|383 2 gn|386 11 gn|390 1 pc|403,406 1 sb|414 5 gn|423 1 gn|431 3 pc|463 7 bs|750 5 lb|759,761,763 1 pc|766 29 pc|805 15 pc F|820 9 gn|829 3 gn|833 2 pc|841 1 sb|847 2 pc|851 3 gn|858 1 pc|896 7 bs|931 2 lb|936 1 pc|938 20 pc|959 23 pc F|994,996 1 pc|997 16 gn|1014,1017 2 pc|1025 2 sb|1031 1 pc|1032 2 gn|1035 2 gn|1049 1 pc|1081 8 bs|1232 8 lb|1243 3 pc|1247 23 pc',
        '-3 17 ip|15 4 kk|51 1 yl|58 2 kk|61 1 yl|63 2 kk|123 15 re Pa|159 1 or|164 1 vi|172 18 ip|177 1 kk|190 7 kk|223 4 kk|228,232 1 lb|287 9 re P|326 1 or|338 9 ip|347 9 ip U|357 9 kk|391,395 1 kk|463 7 re|751 4 or|767 20 ip|771,779 1 kk|787 7 kk|832 2 kk|834 2 lb|896 7 re|931 2 or|942 6 ip|948 1 kk|951 7 ip|959 12 ip U|971 10 kk|1009 1 yl|1011 1 kk|1014 4 kk|1081 8 re|1233 6 or|1248 15 ip|1263 6 kk',
        '2,7,9 1 lb|15 4 lb|52 1 lb|58 2 lb|62 3 lb|124 14 eg S|159 1 og|177,184,186 1 lb|190 7 lb|224 2 lb|229 3 lb|287 9 eg S|327 1 vi|341,345,347 1 lb|357 9 lb|391,394 1 lb|463 7 eg|751 3 vi|754 2 og|771,779,782,787 1 lb|789 5 lb|832 3 lb|896 7 eg|931 2 vi|948,955,959 1 lb|971 3 lb|975,980 1 lb|977 2 lb|1011,1014,1016,1018 1 lb|1082 7 eg|1233 6 vi|1252,1257,1259 1 lb|1263 6 lb',
        '125 13 ac W|159 1 cx|287,463,896,1082 8 ac|327 1 cx|751 3 cx|931 2 cx|1234 5 cx',
        '125 13 og W|159 1 db|287,463,896,1082 8 og|327 1 db|752 2 db|931 2 db|1234 5 db',
        '125 13 eg S|138 1 or|288,464,896,1082 7 eg|296,471,903,1089 1 or',
        '125,288,464,896,1082 2 cx|127,290,466,898,1084 2 lm|129,291,467,899,1085 3 mg|134,293,469,901,1087 1 w|136,295,470,902,1088 2 or',
        '126,288,465,897,1083 1 lm|128,290,467,899,1085 1 hp|130,291,897,1086 2 gt|132,292,468,899 1 cx|138,295,470,902,1089 1 dk',
        '128,289,466,898,1084 1 dk|138,296,470,902,1089 1 eg'
    ] },
    { name: 'RHIThread', lanes: [
        '-6 52 yx ExecuteT|46 37 yx Execut|83 38 yx Exe|122 3 px|125 24 yx Exe|148 23 yx E|171 44 yx Execute|216 38 yx Execut|255 32 yx Ex|288 3 px|291 15 yx Ex|306 25 yx Ex|332 6 yx|338 40 yx Execut|378 40 yx Execut|419 31 yx Ex|451 4 px|455 18 yx Ex|474 9 yx E|483 70 yx ExecuteTas|555 22 yx Exe|577 30 yx Exec|607 88 yx ExecuteTask (13|695 18 yx E|714 3 px|718 26 yx Exe|744 12 yx E|756 10 yx E|766 15 yx Ex|781 45 yx Execute|828 30 yx Exec|858 22 yx Exe|880 10 yx E|890 85 px WaitForTasks (1|975 28 yx Exec|1004 4 px|1008 25 yx Exe|1034 14 yx|1048 10 yx E|1058 19 yx Ex|1077 24 yx Exe|1101 61 yx ExecuteTas|1162 10 yx E|1172 34 px WaitF|1206 12 yx E|1219 4 px|1223 28 yx Exe|1251 8 yx|1259 15 yx Ex',
        '0 5 cx|7 9 cx|22,24,26 1 cx|28 16 co Co|48 1 cx|50 7 cx|59 1 cx|61 10 cx|72,74 1 cx|76 7 co|84,88 1 cx|91 3 cx|95 1 cx|97 1 vi|99 3 cx|104 2 co|107,110 1 gt|113 3 cx|117 1 co|121 1 vi|130,132 1 cx|138 5 cx|143 6 co|151 5 cx|158 3 cx|161 6 cm|168 1 co|171 3 gt|176 4 cx|182 1 cx|185 5 cx|191,193,195 1 cx|197 18 co Co|218 1 cx|223 6 cx|232 6 cx|239 8 cx|249 6 co|257,259 1 cx|262 4 cx|267 1 cm|271 2 gt|277 5 cx|285 1 w|291 1 cm|302 5 co|309 3 cx|314,316 1 cx|321 4 co|327 1 vi|331 3 cx|336 1 co|342,344,347 1 cx|349 15 cx|372 6 co|380,382 1 cx|385 9 cx|397 2 cx|403,406 1 cx|410 8 co|420,422 1 cx|425 6 cx|431 3 cm|435 1 gt|437 5 cx|445 4 co|452 2 cx|460 1 vi|464 7 cx|471 3 co|476 3 cx|480 4 cx|486,488 1 cx|491 56 co Command|547 5 vi|553,555 1 cx|558 3 cx|564 9 cx|573 3 co|577 1 gt|582 1 cx|584 2 cx|588 8 cx|599 3 cx|602 5 co|608 5 cx|681 3 cx|686 2 cx|691 4 co|696 1 cx|699 3 vi|704 1 co|709,712 1 cx|718 1 gt|723 1 vi|729 11 cx|741 2 co|747 3 cx|751 2 cx|756 2 cx|760 2 cx|764 4 cm|769 1 gt|772 2 vi|776 3 cx|780 3 co|784 7 cx|799,801,803,806 1 cx|811 1 hp|813 15 co Co|831 23 cx|853 5 co|861 4 cx|866,869 1 cx|873 3 cx|877 3 co|882 1 gt|886 2 vi|890 1 co|979 1 yl|994 1 cx|996 7 co|1008 1 gt|1014 1 w|1017 1 vi|1020,1022 1 cx|1025 4 cx|1029 4 co|1034 2 gt|1038 3 cx|1043 1 cx|1046 7 cm|1056 1 vi|1059 5 cx|1065 1 cx|1068 1 vi|1071 3 cx|1075 2 co|1081 8 cx|1090,1092 1 cx|1094 7 co|1104 8 cx|1112 50 co Comman|1163 2 gt|1167 1 vi|1171 1 gt|1207 1 yl|1213 1 cx|1215 3 co|1224 1 gt|1227 1 w|1233 7 cx|1240 5 co|1246 3 cx|1250 1 cm|1253 3 cx|1258 5 cm|1264 2 cx|1270 4 co',
        '28 15 su Su|76 5 su|81 3 gt|105 2 su|107,110,114,117,125 1 gt|119,122 1 vi|143 2 su|145 5 lc|155 2 su|162 2 su|167 1 gt|170 2 vi|197 18 su Su|249 6 su|266 2 su|269,271,277 1 gt|273 1 lc|282 1 vi|286,291 1 gt|302 2 su|304 3 lc|321 3 su|331 1 su|334 1 gt|337 1 gt|372 4 su|376 1 gt|411 7 su|431 3 su|435,437,440,445 1 gt|442,448 1 vi|456 1 gt|470 2 su|474 1 gt|481 2 gt|491 57 su Submissio|548,551 1 gt|554 1 vi|573 4 su|603 4 su|606 1 gt|691 3 su|694 2 gt|699 3 gt|705 1 gt|709,712 1 vi|718 1 gt|740 3 su|744 1 gt|754 2 su|764 2 su|769 3 su|778 2 su|813 14 su S|827 1 gt|853 4 su|876 4 su|881 1 gt|886 1 gt|890 1 gt|979 1 gs|996 5 su|1001 3 lc|1008 1 gt|1029 3 su|1033 2 lc|1040 1 su|1046 2 su|1049 1 lc|1052 2 su|1058 1 su|1074 3 su|1094 7 su|1101 1 gt|1112 50 su Submissi|1162 2 gt|1167 1 su|1171 1 lc|1208 1 gs|1215 2 su|1217 2 lc|1224 1 gt|1240 3 su|1244 1 lc|1251 1 su|1258 2 su|1263 1 lc|1270 4 su',
        '28 7 gp|40 3 gt|76 3 gt|79 3 vi|105 2 gt|109,118 1 hp|111 1 vi|114 2 gr|121 1 gt|143 2 vi|145 3 gt|155 1 gt|162 2 vi|167,170 1 gt|197 11 gp G|210 5 gt|249 3 gt|252 3 vi|266 2 vi|269,277 1 gt|271 1 hp|274 1 lb|282,286 1 gt|302 2 vi|304 3 gt|321,331,334,337 1 gt|372 2 vi|376 1 gt|411 3 gt|414 4 vi|431 2 gt|435 1 hp|437,440 1 gt|443 1 gr|448 3 vi|470 2 gt|481 2 gt|491 57 gt ExecuteCo|551,554 1 gt|573 2 vi|576 1 gt|603 4 gt|691 3 gt|696 1 hp|699 2 vi|705 1 gt|709,712 1 gt|740 1 vi|743 2 gt|754,764 1 gt|769 3 gt|778 2 vi|813 12 gp G|826 1 gt|853 2 gt|855 3 vi|876 2 gt|879 1 gt|881 1 hp|885 2 lb|890 1 gt|979 1 gr|996 2 vi|999 2 gt|1029 3 gt|1033 2 gt|1040,1046,1049 1 gt|1053,1058 1 vi|1074 1 vi|1076 1 gt|1094 2 gt|1096 4 vi|1100 1 gt|1112 49 gt Execute|1161,1163 1 hp|1168 1 lb|1172 1 gt|1208 1 gr|1216 1 vi|1240 2 gt|1242 3 gt|1251,1258,1263 1 gt|1270 1 vi|1272 2 gt',
        '31 4 sb|76,79 1 sb|105 2 sb|118,121 1 sb|143,145,148 1 sb|155 1 sb|162 1 sb|167,170 1 sb|199 8 sb|249,251,253 1 sb|267 2 sb|282,286 1 sb|302,304,306 1 sb|321,331,334,337 1 sb|373 2 sb|411,414,416 1 sb|431,433 1 sb|445 1 sb|448 2 sb|470,472,474 1 sb|481 1 sb|491 1 sb|550,554 1 sb|573 2 sb|603 3 sb|691,693 1 sb|709,712 1 sb|740 2 sb|744 1 sb|754,765 1 sb|769 3 sb|778 1 sb|818 3 sb|853 3 sb|876,879 1 sb|997 1 sb|1029,1031,1034 1 sb|1040,1046,1052,1058 1 sb|1075 1 sb|1094,1096 1 sb|1097 3 sb|1112 1 sb|1161 1 sb|1215 1 sb|1240,1242,1244 1 sb|1251,1258,1263,1270 1 sb'
    ] },
    { name: 'RenderThread 0', lanes: [
        '-7 144 fr Frame (29.9 ms)|137 1 w|138 159 fr Frame (24.1 ms)|298 1 w|299 164 fr Frame (25 ms)|464 1 w|465 264 fr Frame (39.8 ms)|729 3 lg|732 288 fr Frame (43.5 ms)|1020 1 w|1021 210 fr Frame (31.7 ms)|1231 3 lg|1235 39 fr Frame (',
        '-4 71 df FDeferredSha|67 61 rb FRDGBuilde|128 8 th|139 6 cm|145 1 fs|147 3 mn|151 100 df FDeferredShadingS|251 41 rb FRDGB|292 5 th|299 4 cm|304 1 fs|306 3 px|312 104 df FDeferredShadingSc|416 44 rb FRDGBu|460 4 th|465 4 cm|470 1 fs|474 3 mn|477 136 df FDeferredShadingSceneRe|613 106 rb FRDGBuilder::Execut|721 6 th|729 1 w|732 34 pl WaitF|766 40 pl WaitFor|806 31 pl WaitF|838 8 pl|846 16 pl W|863,868,871,875 1 w|877 4 pl|881 3 fs|887 5 mn|892 5 or|898 51 df FDeferred|949 63 rb FRDGBuilde|1012 6 th|1020 1 w|1023 28 pl Wait|1052 4 pl|1058 11 pl|1069 3 fs|1073 3 mn|1077 118 df FDeferredShadingScen|1195 29 rb FRDG|1225 4 th|1231 1 w|1235 11 pl W|1246 28 pl WaitF',
        '0 1 gt|2 8 lc F|10 2 gt|14 1 vi|17 7 sk|24 1 gt|28 7 lc|35 8 mn F|44 9 bo F|54 2 vi|57 1 yl|60 1 gt|67 1 dk|70 11 rb F|82 4 mn|88 35 gy Parall|123 4 or|129 2 fs|135 1 vi|139 7 mn|147 5 rb|155 15 fd FD|171 2 cy|176 8 cy F|185 17 lc FD|203 2 vi|208 6 sk|216 2 og|219 4 lc|224 8 mn|233 9 bo F|244 2 rb|247 1 yl|253 8 rb|261 2 mn|264 20 gy Par|284 6 or|292 2 fs|296 1 vi|299 6 mn|306 5 rb|312 8 cm|322 20 fd FDe|343 8 cy|353 18 lc FD|372 2 vi|377 4 sk|384 4 lc|390 4 mn|395 7 bo|403 2 yl|409 1 w|418 9 rb F|428 2 mn|431 18 gy Par|450 8 or|460 2 fs|464 7 mn|472 2 vi|474 3 rb|478 3 w|482 76 fd FDeferredShad|559 6 cy|566 9 lc F|577 1 vi|581 4 sk|586 2 og|588 4 lc|593 4 mn|598 6 bo|604 2 sk|609 2 lm|613 67 dg FRDGBuilder:|681 15 rb FR|697 2 mn|701 13 gy P|715 4 or|721 1 fs|726 1 vi|729,731 1 w|863 12 mn|876 1 mn|883 2 vi|888 10 rb|898 6 fd F|904 1 og|906 2 or|909 8 cy|918 6 lc|925 1 fs|928 1 og|932 3 lc|938 5 bo|944 1 yl|951 2 rb|953 16 rb FR|970 3 mn|973 29 gy Paral|1004 8 or|1012 2 fs|1018 1 vi|1020,1022 1 mn|1058 7 mn|1067 4 bl|1072 5 rb|1077 32 fd FDefe|1110 50 cy FSceneR|1160 7 lc|1169 1 og|1171 3 bo|1175 3 sk|1181 7 bo|1191 2 yl|1195 9 rb|1204 2 mn|1207 11 gy P|1219 4 or|1224 2 fs|1230 1 vi|1232,1234 1 mn',
        '1 4 sg|5 4 cm|14 1 w|17 2 mn|20 2 go|24 1 vi|28 6 lc|35 8 tq R|48 5 mn|56 1 vi|60 1 w|69,73,75 1 vi|88 35 en EndFlu|124 3 fs|129 1 vi|135 1 w|147 4 mn|152 3 px|156 16 fs FS|172 3 or|176 1 w|184 4 gt|189 11 cm F|203 1 w|208 2 bo|212 4 go|218 3 mn|222 2 lc|224 8 cx|235,238,241 2 mn|246 1 w|253,257 1 vi|264 24 en End|289 2 fs|293 1 vi|296 1 w|306 3 mn|311 9 px|322 18 fs FS|340 4 or|345 1 w|353 6 lc|361 9 cm F|372 1 w|378 3 bo|381 3 go|387 2 lc|392 2 mn|396 2 gt|399 3 mn|404,409 1 vi|418,422 1 vi|430 21 en End|452 1 vi|455 3 fs|463 1 w|471 1 w|474 4 mn|478 3 px|483 73 fs FSceneRender|556 2 or|560,562 1 w|565 2 lc|568 7 cm|578 1 vi|582 2 go|585 2 lc|588 4 gt|592 5 cx|600 4 mn|606 1 vi|610 1 w|615 64 dg FRDGBuffer|681 1 dk|688,690 1 vi|701 14 en En|717 3 fs|726 1 vi|884 1 w|887 10 mn|899 7 fs|908,910 2 og|918,921 3 gt|925 1 og|928 3 lc|933 2 cx|938 5 mn|946 1 w|952,956,957 1 vi|974 30 en EndFl|1006 3 fs|1012 1 vi|1017 1 w|1072 4 mn|1079 27 fs FSce|1106 3 or|1110 1 w|1160 4 gt|1165 2 cm|1169 2 lc|1172 3 go|1177 3 cx|1181 3 mn|1187 1 vi|1192 1 w|1197,1199 2 vi|1206 13 en E|1222 3 fs|1229 1 w',
        '1 1 vi|4,6 1 lm|7 1 eg|9 1 og|17,21 1 vi|24 2 cm|32 1 w|42 1 gt|69,73,75 1 dd|88 34 wb WaitU|124 1 gt|130 1 vi|135 2 vi|148 2 re|157 9 fn F|167 4 cx|172 1 vi|176 1 w|186 5 sg|193 1 mn|197 2 og|209,214 1 vi|215 2 cm|222 1 w|231 1 gt|253,257 1 dd|264 24 wb Wait|290 1 gt|296 1 vi|307 4 re|323 10 fn F|335 5 cx|341 1 vi|345 1 w|359 2 og|362 5 vv|369 1 og|377,383 1 vi|385 1 cm|391 1 w|399 1 gt|418,422 1 dd|430 20 wb Wai|454 1 gt|463 1 vi|474 2 hp|483 66 fn FSceneRend|550 6 cx|557 1 vi|562 1 w|565 1 vi|568 2 vv|573 1 og|582,585 1 vi|591 1 gt|597 1 w|615 64 db2 D3D12RHI::|681,688,690 1 dd|701 12 wb W|717 1 gt|726 1 vi|887 2 re|892 5 sg|899 4 cy|908,910 1 vi|918 1 og|921 1 vv|924 1 w|928 2 og|933,937 1 gt|951,955,957 1 dd|974 29 wb Wait|1007 1 gt|1017 2 vi|1074 2 re|1079 20 fn FSc|1101 4 cx|1108 1 vi|1111 1 yl|1161 1 og|1164 2 gt|1173 1 w|1180 1 gt|1196,1199 2 dd|1206 12 wb W|1222 1 gt|1229 2 vi',
        '1 1 w|5 2 dd|7 1 or|21 1 cx|124 1 gt|136 1 dd|149 1 hp|151 1 or|157 9 vv V|169 1 or|184 1 w|188 4 gy|192 1 or|213 1 cx|290 1 gt|296 1 dd|308 1 fs|323 12 vv Vi|336,338 1 gt|353 1 w|362 5 dk|367 1 or|380 1 cx|454 1 gt|463 1 dd|474 1 vi|482 68 vv View 0 (10.2|551 1 or|554 1 gt|565 1 w|568 2 or|571 1 vi|585 1 cx|615 64 tp D3D12RHI::|680 1 dd|717 1 gt|726 1 dd|889 7 og|898 3 eg|902,904 1 gt|918 1 w|921 2 dk|929 1 cx|1007 1 gt|1018 1 dd|1075 1 hp|1079 22 vv Vie|1105 1 gt|1161 1 w|1164 2 or|1172 1 cx|1222 1 gt|1229 2 dd',
        '5 3 lb|135 2 gt|149 1 cx|157 7 fv|164 3 og|169 1 gt|189 3 gt|296 1 gt|308 1 cx|323 10 fv F|334 2 og|338 1 gt|362 5 lb|463 1 gt|474 1 lb|483 63 fv FetchVisibil|547 3 og|554 1 gt|569 1 cx|573 1 w|615 64 fg D3D12RHI::|680 1 dd|726 1 gt|889 8 og|899 1 gt|902,904 1 vi|921 2 gt|1018 1 gt|1075 1 lb|1079 17 fv Fe|1096 5 og|1105 1 vi|1164 2 gt|1229 2 gt',
        '135 1 dd|149 2 lb|157 7 fp|165 1 hp|169 1 dd|296 1 dd|308 1 cx|323 11 fp F|335,338 1 hp|463 1 dd|474 1 lb|483 63 fp FetchVisibil|547 2 dd|551 1 hp|554 1 gt|573 1 dd|615 1 hp|680 1 hp|726 1 dd|889 2 vi|892 5 bu|899 1 hp|902 1 dd|1018 1 dd|1075 1 lb|1079 17 fp Fe|1097 2 dd|1100 1 hp|1104 1 dd|1229 1 dd',
        '135 1 hp|157 7 fg|165 1 sb|169 1 gt|296 1 hp|323 11 fg F|335 1 lb|338 1 dd|463 1 hp|474 1 vi|483 63 fg FetchVisibil|547 4 bu|554 1 dd|574 1 dd|726 1 hp|899 3 lb|904 1 dd|1018 1 hp|1079 17 fg|1097 3 lb|1104 1 dd|1229 1 hp',
        '157 7 fo|169 1 hp|323 11 fo f|338 1 hp|483 63 fc forEach ove|554 1 hp|574 1 hp|899 1 cx|904 1 hp|1079 17 fc for|1104 1 hp',
        '157 8 in|324 9 in|484 60 in|899 1 gt|1080 16 in'
    ] }
];

const root = document.getElementById('tracks');
tracks.forEach(track => {
    const div = document.createElement('div');
    div.className = 'track';
    div.innerHTML = `<h4 class="${track.cls || ''}">${track.name}</h4>`;
    track.lanes.forEach(data => {
        const lane = document.createElement('div');
        lane.className = 'lane';
        data.split('|').forEach(item => {
            const [, xs, w, color, text] = item.match(/^(\S+) (\d+) (\S+) ?(.*)$/);
            xs.split(',').forEach(x => {
                const ev = document.createElement('div');
                ev.className = 'ev' + (w > 4 ? ' boxed' : '') + (lightText.includes(color) ? ' light' : '');
                ev.style.left = x + 'px';
                ev.style.width = w + 'px';
                ev.style.backgroundColor = pal[color];
                ev.textContent = text;
                lane.appendChild(ev);
            });
        });
        div.appendChild(lane);
    });
    root.appendChild(div);
});

// ---------- callers / callees ----------
// level, state (o open, c closed, - leaf), hot, name, count, incl, excl
const callers = [
    [0, 'o', 1, 'FEngineLoop', 1, '65.3 ms', '745.8 µs'],
    [1, '-', 1, 'FEngineLoop::Tick', 1, '65.3 ms', '745.8 µs']
];
const callees = [
    [0, 'o', 1, 'FEngineLoop', 1, '65.3 ms', '745.8 µs'],
    [1, 'o', 1, 'UWorld_Tick', 1, '58.1 ms', '41.7 ms'],
    [2, 'c', 1, 'TickCompletionEvents', 7, '15 ms', '65 µs'],
    [2, 'o', 0, 'ExecuteTask', 35, '1 ms', '662.3 µs'],
    [3, 'c', 0, 'FActorComponentTickFunction::ExecuteTick', 30, '325.7 µs', '245.2 µs'],
    [3, '-', 0, 'USkeletalMeshComponent_CompleteParallelAnimationEva', 1, '24.5 µs', '24.5 µs'],
    [2, 'c', 0, 'ULandscapeSubsystem::Tick', 1, '246.3 µs', '18.7 µs'],
    [2, '-', 0, 'NetBroadcastTickTime', 1, '43.1 µs', '43.1 µs'],
    [2, 'c', 0, 'ForEachObjectOfClass', 2, '22.9 µs', '2.2 µs'],
    [2, 'c', 0, 'bDoingActorTicks', 1, '15 µs', '10.1 µs'],
    [2, 'c', 0, 'UWorldPartitionStreamingPolicy::UpdateStreamingState', 1, '9 µs', '3.7 µs'],
    [2, '-', 0, 'UpdateSpeedTreeWind', 1, '6.5 µs', '6.5 µs'],
    [2, '-', 0, 'FAsyncTask::SyncCompletion', 2, '6 µs', '6 µs'],
    [2, '-', 0, 'FXSystem', 1, '4.4 µs', '4.4 µs'],
    [2, '-', 0, 'ConditionalCollectGarbage', 1, '3.9 µs', '3.9 µs'],
    [2, '-', 0, 'FTimerManager_Tick', 1, '3.4 µs', '3.4 µs'],
    [2, '-', 0, 'BroadcastPostTickFlush', 1, '3.2 µs', '3.2 µs'],
    [2, '-', 0, 'WaitUntilTasksComplete', 1, '1.1 µs', '1.1 µs'],
    [2, '-', 0, 'LevelInstanceSubsystem', 1, '600 ns', '600 ns'],
    [1, 'o', 0, 'UWorld_SendAllEndOfFrameUpdates', 1, '3.1 ms', '2.8 ms'],
    [2, 'c', 0, 'FScene_UpdatePrimitiveTransform', 103, '245.5 µs', '242.4 µs'],
    [2, 'c', 0, 'WaitUntilTasksComplete', 1, '37.3 µs', '4.7 µs'],
    [2, '-', 0, 'ParallelFor', 1, '1.1 µs', '1.1 µs'],
    [1, 'c', 0, 'Slate::Tick (Time and Widgets)', 1, '1.5 ms', '22.9 µs'],
    [1, 'c', 0, 'FViewport_Draw', 1, '1.2 ms', '1.1 ms'],
    [1, 'c', 0, 'FStreamingManagerCollection::UpdateResourceStreaming', 1, '278.6 µs', '253.7 µs'],
    [1, '-', 0, 'WinPumpMessages', 1, '265.2 µs', '265.2 µs'],
    [1, 'c', 0, 'Slate::Tick (Platform and Input)', 1, '40.1 µs', '1.8 µs'],
    [1, '-', 0, 'ExecuteTask', 40, '30.6 µs', '30.6 µs'],
    [1, '-', 0, 'ProcessAsyncLoading', 1, '13.2 µs', '13.2 µs'],
    [1, 'c', 0, 'ForEachObjectOfClass', 1, '12.6 µs', '3.4 µs'],
    [1, '-', 0, 'FStats::AdvanceFrame', 1, '11.7 µs', '11.7 µs'],
    [1, '-', 0, 'FShaderCompilingManager::ProcessAsyncResults', 1, '2.9 µs', '2.9 µs'],
    [1, '-', 0, 'FDistanceFieldAsyncQueue::ProcessAsyncTasks', 1, '1.2 µs', '1.2 µs'],
    [1, '-', 0, 'FCardRepresentationAsyncQueue::ProcessAsyncTasks', 1, '600 ns', '600 ns'],
    [1, '-', 0, 'FSkinnedAssetCompilingManager::ProcessSkinnedAssets', 1, '400 ns', '400 ns']
];
const unitClass = { m: 'ms', 'µ': 'us', n: 'ns' };
const stateClass = { o: 'open', c: 'closed', '-': 'leaf' };

function fillCalls(id, rows) {
    document.getElementById(id).innerHTML = rows.map(([level, state, hot, name, count, incl, excl]) => `
        <tr class="${unitClass[incl.split(' ')[1][0]]}">
            <td><div class="cell" style="padding-left: ${3 + level * 10}px"><i class="${stateClass[state]}"></i>${hot ? '<svg class="flame"><use href="#i-flame"/></svg>' : '<i class="no-flame"></i>'}${name}</div></td>
            <td>${count}</td><td>${incl}</td><td>${excl}</td>
        </tr>`).join('');
}
fillCalls('callers', callers);
fillCalls('callees', callees);
```
